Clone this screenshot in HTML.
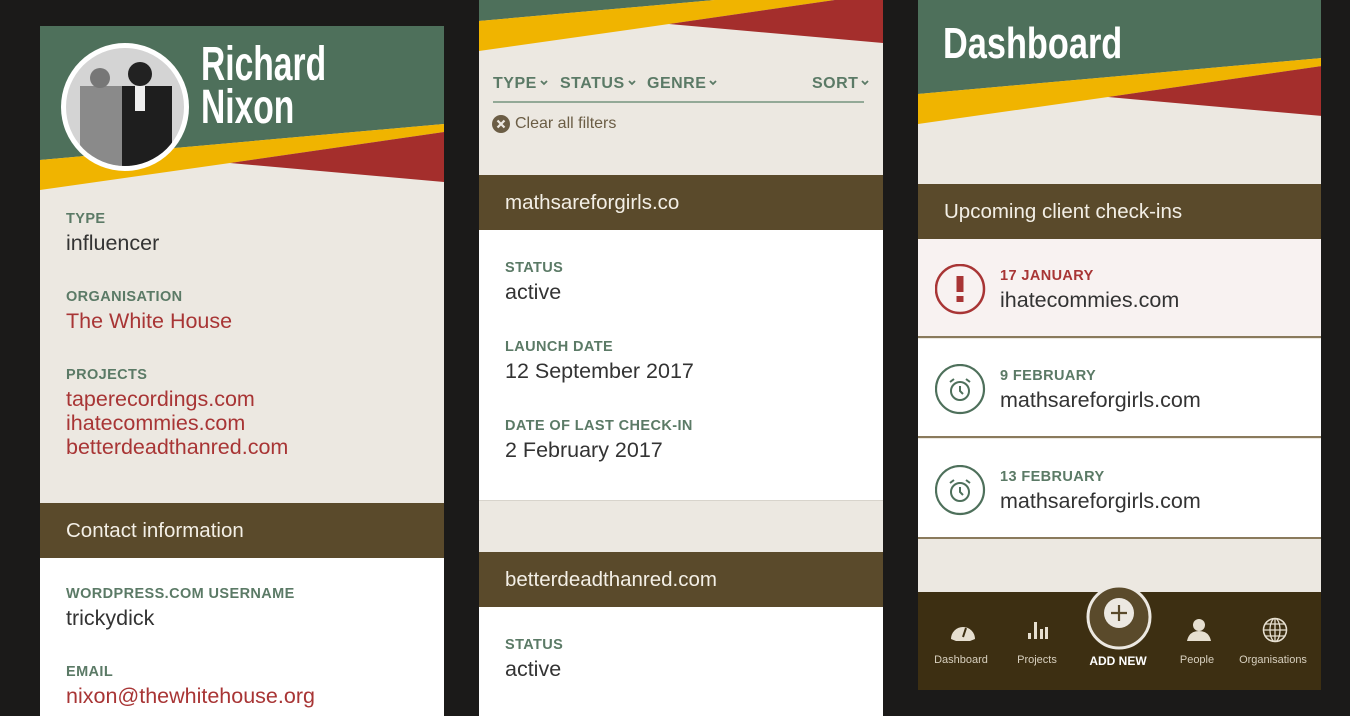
<!DOCTYPE html>
<html><head><meta charset="utf-8"><style>
*{margin:0;padding:0;box-sizing:border-box}
body{width:1350px;height:716px;background:#1b1a19;position:relative;overflow:hidden;font-family:"Liberation Sans",sans-serif}
.p{position:absolute;background:#ece8e1;overflow:hidden}
.abs{position:absolute}
.lbl{position:absolute;font-size:14.5px;font-weight:bold;color:#5b7a66;letter-spacing:.4px}
.val{position:absolute;font-size:21.5px;color:#333}
.lnk{position:absolute;font-size:21.5px;color:#a83535}
.hdr{position:absolute;left:0;width:100%;height:55px;background:#5a4a2b;color:#f3efe6;font-size:20.5px;padding-left:26px;line-height:55px}
.w{position:absolute;left:0;width:100%;background:#fff}
.cond{font-family:"Liberation Sans",sans-serif;font-weight:bold;color:#fff;transform-origin:0 0;white-space:nowrap}
.nav{position:absolute;font-size:11px;color:#d8d0bf;text-align:center;width:80px}
.flt{position:absolute;top:75px;font-size:16px;font-weight:bold;color:#5b7a66;letter-spacing:.5px}
.flt svg{margin-left:3px;vertical-align:2px}
</style></head><body>

<!-- Panel 1 -->
<div class="p" style="left:40px;top:26px;width:404px;height:690px">
<svg class="abs" style="left:0;top:0" width="404" height="200">
<rect width="404" height="200" fill="#ece8e1"/>
<polygon points="0,0 404,0 404,98 0,134" fill="#4e705b"/>
<polygon points="0,134 404,98 404,106 190,137 0,164" fill="#f0b400"/>
<polygon points="190,137 404,106 404,156" fill="#a42e2c"/>
<defs><clipPath id="c"><circle cx="85" cy="81" r="59"/></clipPath></defs>
<circle cx="85" cy="81" r="64" fill="#fff"/>
<g clip-path="url(#c)">
<rect x="20" y="20" width="130" height="130" fill="#d4d4d4"/>
<rect x="40" y="60" width="50" height="90" fill="#8a8a8a"/>
<circle cx="60" cy="52" r="10" fill="#777"/>
<rect x="82" y="60" width="50" height="90" fill="#1e1e1e"/>
<circle cx="100" cy="48" r="12" fill="#222"/>
<rect x="95" y="60" width="10" height="25" fill="#eee"/>
</g>
</svg>
<div class="abs cond" style="left:161px;top:17px;font-size:48px;line-height:43px;transform:scaleX(.7)">Richard<br>Nixon</div>
<div class="lbl" style="left:26px;top:185px">TYPE</div>
<div class="val" style="left:26px;top:205px">influencer</div>
<div class="lbl" style="left:26px;top:263px">ORGANISATION</div>
<div class="lnk" style="left:26px;top:283px">The White House</div>
<div class="lbl" style="left:26px;top:341px">PROJECTS</div>
<div class="lnk" style="left:26px;top:361px;line-height:24px">taperecordings.com<br>ihatecommies.com<br>betterdeadthanred.com</div>
<div class="hdr" style="top:477px">Contact information</div>
<div class="w" style="top:532px;height:200px"></div>
<div class="lbl" style="left:26px;top:560px">WORDPRESS.COM USERNAME</div>
<div class="val" style="left:26px;top:580px">trickydick</div>
<div class="lbl" style="left:26px;top:638px">EMAIL</div>
<div class="lnk" style="left:26px;top:658px">nixon@thewhitehouse.org</div>
</div>

<!-- Panel 2 -->
<div class="p" style="left:479px;top:0;width:404px;height:716px">
<svg class="abs" style="left:0;top:-113px" width="404" height="200">
<polygon points="0,0 404,0 404,98 0,134" fill="#4e705b"/>
<polygon points="0,134 404,98 404,106 190,137 0,164" fill="#f0b400"/>
<polygon points="190,137 404,106 404,156" fill="#a42e2c"/>
</svg>
<div class="flt" style="left:14px">TYPE<svg width="8" height="6"><path d="M1 1l3 3 3-3" stroke="#5b7a66" stroke-width="1.8" fill="none"/></svg></div>
<div class="flt" style="left:81px">STATUS<svg width="8" height="6"><path d="M1 1l3 3 3-3" stroke="#5b7a66" stroke-width="1.8" fill="none"/></svg></div>
<div class="flt" style="left:168px">GENRE<svg width="8" height="6"><path d="M1 1l3 3 3-3" stroke="#5b7a66" stroke-width="1.8" fill="none"/></svg></div>
<div class="flt" style="left:333px">SORT<svg width="8" height="6"><path d="M1 1l3 3 3-3" stroke="#5b7a66" stroke-width="1.8" fill="none"/></svg></div>
<div class="abs" style="left:14px;top:101px;width:371px;height:2px;background:#93a997"></div>
<svg class="abs" style="left:13px;top:115px" width="18" height="18"><circle cx="9" cy="9" r="9" fill="#6b5d45"/><path d="M5.5 5.5L12.5 12.5M12.5 5.5L5.5 12.5" stroke="#ece8e1" stroke-width="2.2"/></svg>
<div class="abs" style="left:36px;top:115px;font-size:16px;color:#6b5d45">Clear all filters</div>
<div class="hdr" style="top:175px">mathsareforgirls.co</div>
<div class="w" style="top:230px;height:271px;border-bottom:1px solid #d8d4cc"></div>
<div class="lbl" style="left:26px;top:260px">STATUS</div>
<div class="val" style="left:26px;top:280px">active</div>
<div class="lbl" style="left:26px;top:339px">LAUNCH DATE</div>
<div class="val" style="left:26px;top:359px">12 September 2017</div>
<div class="lbl" style="left:26px;top:418px">DATE OF LAST CHECK-IN</div>
<div class="val" style="left:26px;top:438px">2 February 2017</div>
<div class="hdr" style="top:552px">betterdeadthanred.com</div>
<div class="w" style="top:607px;height:120px"></div>
<div class="lbl" style="left:26px;top:637px">STATUS</div>
<div class="val" style="left:26px;top:657px">active</div>
</div>

<!-- Panel 3 -->
<div class="p" style="left:918px;top:0;width:403px;height:690px">
<svg class="abs" style="left:0;top:-40px" width="404" height="200">
<polygon points="0,0 404,0 404,98 0,134" fill="#4e705b"/>
<polygon points="0,134 404,98 404,106 190,137 0,164" fill="#f0b400"/>
<polygon points="190,137 404,106 404,156" fill="#a42e2c"/>
</svg>
<div class="abs cond" style="left:25px;top:19px;font-size:44px;transform:scaleX(.78)">Dashboard</div>
<div class="hdr" style="top:184px">Upcoming client check-ins</div>
<div class="w" style="top:239px;height:99px;background:#f8f2f1;border-bottom:2px solid #8a7a5c"></div>
<div class="w" style="top:339px;height:99px;border-bottom:2px solid #8a7a5c"></div>
<div class="w" style="top:439px;height:100px;border-bottom:2px solid #8a7a5c"></div>
<svg class="abs" style="left:17px;top:264px" width="52" height="52"><circle cx="25" cy="25" r="24" fill="none" stroke="#a83535" stroke-width="2.5"/><rect x="21.5" y="12" width="7" height="16" fill="#a83535"/><rect x="21.5" y="32" width="7" height="6" fill="#a83535"/></svg>
<div class="abs" style="left:82px;top:268px;font-size:14.5px;font-weight:bold;color:#a83535;letter-spacing:.4px">17 JANUARY</div>
<div class="val" style="left:82px;top:288px">ihatecommies.com</div>
<svg class="abs" style="left:17px;top:364px" width="52" height="52"><circle cx="25" cy="25" r="24" fill="none" stroke="#4e705b" stroke-width="2.2"/><circle cx="25" cy="27" r="9" fill="none" stroke="#4e705b" stroke-width="2"/><path d="M25 22v5l3 3M15 18l4-3M35 18l-4-3" stroke="#4e705b" stroke-width="2" fill="none"/></svg>
<div class="abs" style="left:82px;top:368px;font-size:14.5px;font-weight:bold;color:#5b7a66;letter-spacing:.4px">9 FEBRUARY</div>
<div class="val" style="left:82px;top:388px">mathsareforgirls.com</div>
<svg class="abs" style="left:17px;top:465px" width="52" height="52"><circle cx="25" cy="25" r="24" fill="none" stroke="#4e705b" stroke-width="2.2"/><circle cx="25" cy="27" r="9" fill="none" stroke="#4e705b" stroke-width="2"/><path d="M25 22v5l3 3M15 18l4-3M35 18l-4-3" stroke="#4e705b" stroke-width="2" fill="none"/></svg>
<div class="abs" style="left:82px;top:469px;font-size:14.5px;font-weight:bold;color:#5b7a66;letter-spacing:.4px">13 FEBRUARY</div>
<div class="val" style="left:82px;top:489px">mathsareforgirls.com</div>
<div class="abs" style="left:0;top:592px;width:403px;height:98px;background:#3d2f12"></div>
<svg class="abs" style="left:168px;top:584px" width="66" height="66"><circle cx="33" cy="33" r="31" fill="#5a4a2b" stroke="#ece8e1" stroke-width="3"/><circle cx="33" cy="29" r="15" fill="#ece8e1"/><path d="M33 21v16M25 29h16" stroke="#5a4a2b" stroke-width="2.2"/></svg>
<svg class="abs" style="left:31px;top:619px" width="28" height="24"><path d="M2 20A12 12 0 1 1 26 20L21 22H7Z" fill="#e6dfd0"/><path d="M14 18l3-9" stroke="#3d2f12" stroke-width="2"/></svg>
<svg class="abs" style="left:109px;top:620px" width="22" height="20"><rect x="1" y="13" width="3" height="6" fill="#e6dfd0"/><rect x="7" y="2" width="3" height="17" fill="#e6dfd0"/><rect x="13" y="9" width="3" height="10" fill="#e6dfd0"/><rect x="18" y="7" width="3" height="12" fill="#e6dfd0"/></svg>
<svg class="abs" style="left:268px;top:617px" width="26" height="26"><circle cx="13" cy="8" r="6" fill="#e6dfd0"/><path d="M1 24Q3 14 13 14Q23 14 25 24Z" fill="#e6dfd0"/></svg>
<svg class="abs" style="left:344px;top:617px" width="26" height="26"><circle cx="13" cy="13" r="11.5" fill="none" stroke="#e6dfd0" stroke-width="1.6"/><ellipse cx="13" cy="13" rx="5" ry="11.5" fill="none" stroke="#e6dfd0" stroke-width="1.3"/><path d="M13 1.5v23M1.5 13h23M3.5 7h19M3.5 19h19" stroke="#e6dfd0" stroke-width="1.3"/></svg>
<div class="nav" style="left:3px;top:654px">Dashboard</div>
<div class="nav" style="left:79px;top:654px">Projects</div>
<div class="nav" style="left:160px;top:654px;font-size:12px;font-weight:bold;color:#fff">ADD NEW</div>
<div class="nav" style="left:239px;top:654px">People</div>
<div class="nav" style="left:312px;top:654px;width:86px">Organisations</div>
</div>
</body></html>
